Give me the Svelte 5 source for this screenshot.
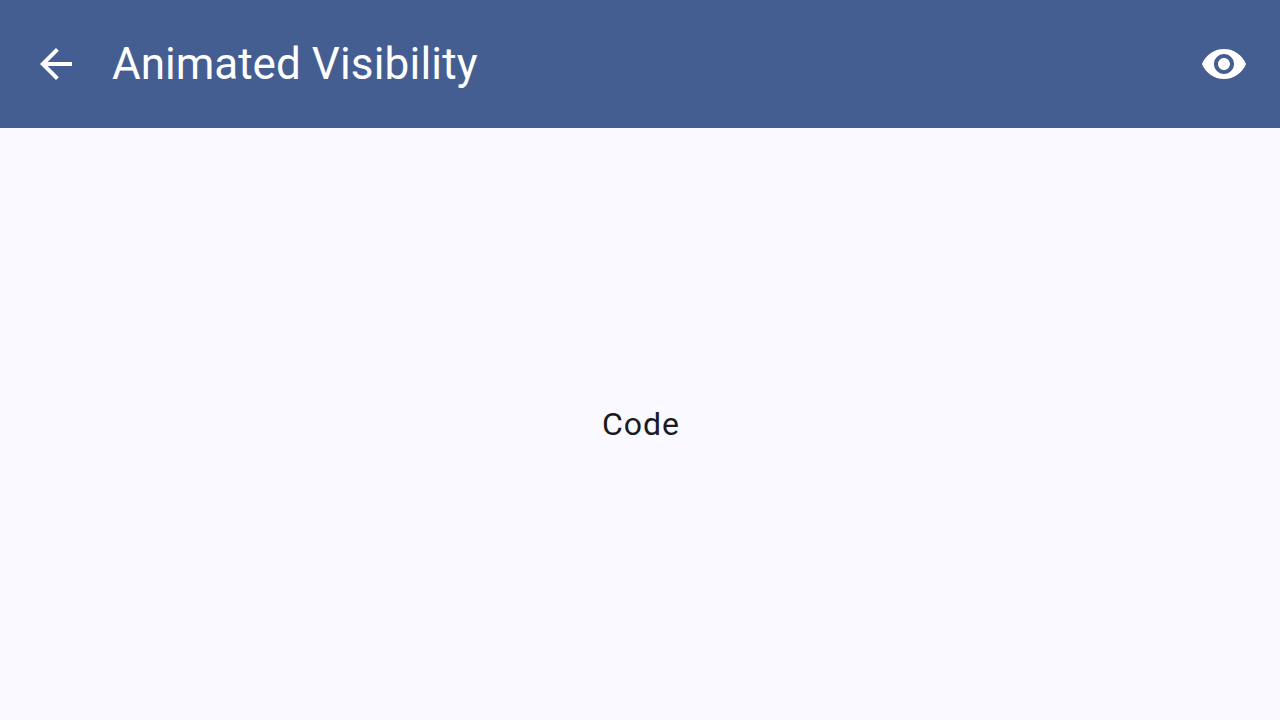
<script>
  let visible = $state(true);
</script>

<div class="screen">
  <header>
    <button aria-label="Back">
      <svg viewBox="0 0 24 24"><path d="M20 11H7.83l5.59-5.59L12 4l-8 8 8 8 1.41-1.41L7.83 13H20v-2z" /></svg>
    </button>
    <h1>Animated <span>Visibility</span></h1>
    <button aria-label="Toggle visibility" onclick={() => (visible = !visible)}>
      <svg viewBox="0 0 24 24"><path d="M12 4.5C7 4.5 2.73 7.61 1 12c1.73 4.39 6 7.5 11 7.5s9.27-3.11 11-7.5c-1.73-4.39-6-7.5-11-7.5zM12 17c-2.76 0-5-2.24-5-5s2.24-5 5-5 5 2.24 5 5-2.24 5-5 5zm0-8c-1.66 0-3 1.34-3 3s1.34 3 3 3 3-1.34 3-3-1.34-3-3-3z" /></svg>
    </button>
  </header>
  <main>
    {#if visible}<p>Code</p>{/if}
  </main>
</div>

<style>
  :global(body) {
    margin: 0;
  }
  .screen {
    display: flex;
    flex-direction: column;
    height: 100vh;
    overflow: hidden;
    background: #faf9ff;
    font-family: Roboto, sans-serif;
  }
  header {
    display: flex;
    align-items: center;
    box-sizing: border-box;
    height: 128px;
    flex: none;
    padding: 0 8px;
    background: #455e91;
    color: #fff;
  }
  button {
    display: grid;
    place-items: center;
    width: 96px;
    height: 96px;
    padding: 0;
    border: 0;
    background: none;
    color: inherit;
  }
  svg {
    width: 48px;
    height: 48px;
    fill: currentColor;
  }
  h1 {
    flex: 1;
    margin: 0 0 0 8px;
    font-size: 44px;
    font-weight: 400;
    line-height: 56px;
  }
  h1 span {
    letter-spacing: 0.2px;
  }
  main {
    flex: 1;
    display: grid;
    place-items: center;
    color: #1a1b20;
  }
  p {
    margin: 0;
    padding-left: 2px;
    font-size: 32px;
    line-height: 48px;
    letter-spacing: 1px;
  }
</style>
